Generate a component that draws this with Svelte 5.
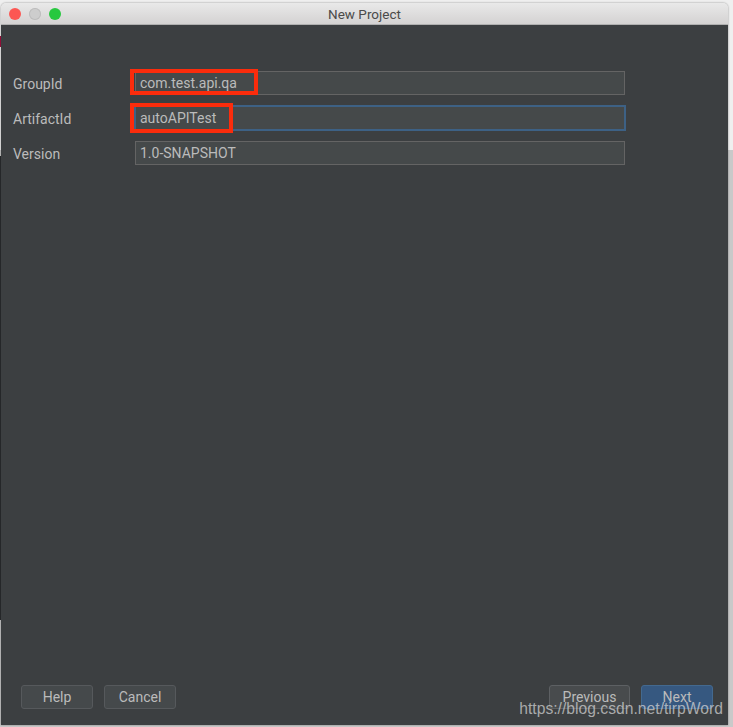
<script>
  const fields = [
    { label: 'GroupId', value: 'com.test.api.qa', mark: 'mark-a' },
    { label: 'ArtifactId', value: 'autoAPITest', mark: 'mark-b', focused: true },
    { label: 'Version', value: '1.0-SNAPSHOT' }
  ];
</script>

<div class="page">
  <div class="window">
    <header class="titlebar">
      <div class="lights">
        <span class="light red"></span>
        <span class="light grey"></span>
        <span class="light green"></span>
      </div>
      <div class="title">New Project</div>
    </header>
    <main class="body">
      <form class="form">
        {#each fields as f}
          <div class="row">
            <label class="label" for={f.label}>{f.label}</label>
            <div class="input" class:focused={f.focused}>
              <span id={f.label} class="value">{f.value}</span>
              {#if f.mark}<span class="mark {f.mark}"></span>{/if}
            </div>
          </div>
        {/each}
      </form>
      <footer class="footer">
        <div class="group">
          <button type="button" class="btn">Help</button>
          <button type="button" class="btn">Cancel</button>
        </div>
        <div class="group right">
          <button type="button" class="btn prev">Previous</button>
          <button type="button" class="btn next">Next</button>
        </div>
      </footer>
      <div class="watermark">https://blog.csdn.net/tirpWord</div>
    </main>
  </div>
</div>

<style>
  :global(body) {
    margin: 0;
    background: #c9c9c9;
  }
  .page {
    width: 733px;
    height: 727px;
    padding: 3px 5px 2px 1px;
    box-sizing: border-box;
    overflow: hidden;
    font-family: Roboto, "Liberation Sans", Arial, sans-serif;
    background:
      linear-gradient(to right, #a3123f 1px, transparent 1px) 0 36px / 100% 11px no-repeat,
      linear-gradient(to right, #2b2d2f 1px, transparent 1px) 0 156px / 100% 464px no-repeat,
      linear-gradient(to bottom, #efefef 0, #efefef 150px, transparent 150px),
      #c9c9c9;
  }
  .window {
    height: 100%;
    display: flex;
    flex-direction: column;
    border-radius: 5px 5px 0 0;
    overflow: hidden;
    box-shadow: 0 0 2px rgba(0, 0, 0, 0.45);
  }
  .titlebar {
    flex: none;
    height: 21px;
    display: flex;
    align-items: center;
    position: relative;
    background: linear-gradient(#e9e9e9, #d4d2d2);
    border-bottom: 1px solid #b0b0b0;
  }
  .lights {
    display: flex;
    gap: 8px;
    padding-left: 8px;
  }
  .light {
    width: 12px;
    height: 12px;
    border-radius: 50%;
  }
  .red { background: #fc5753; }
  .grey { background: #cdcdcd; box-shadow: inset 0 0 0 1px #bdbdbd; }
  .green { background: #27c83f; }
  .title {
    position: absolute;
    left: 0;
    right: 0;
    top: 3px;
    text-align: center;
    font-size: 13.5px;
    line-height: 16px;
    color: #4a4a4a;
  }
  .body {
    flex: 1;
    position: relative;
    display: flex;
    flex-direction: column;
    justify-content: space-between;
    background: #3c3f41;
    padding: 46px 15px 16px 12px;
  }
  .form {
    display: flex;
    flex-direction: column;
    gap: 11px;
  }
  .row {
    display: flex;
    align-items: center;
  }
  .label {
    width: 122px;
    padding-top: 1px;
    font-size: 14px;
    color: #bbbbbb;
  }
  .input {
    position: relative;
    width: 490px;
    height: 24px;
    box-sizing: border-box;
    border: 1px solid #646464;
    background: #45494a;
    color: #bbbbbb;
    font-size: 14px;
    line-height: 23px;
    padding-left: 4px;
  }
  .input.focused {
    border: 2px solid #3d6185;
    width: 492px;
    height: 26px;
    margin: -1px;
    padding-left: 4px;
    line-height: 23px;
  }
  .mark {
    position: absolute;
    border: 4px solid #fb2c0c;
    box-sizing: border-box;
  }
  .mark-a {
    left: -6px;
    top: -3px;
    width: 128px;
    height: 26px;
  }
  .mark-b {
    left: -6px;
    top: -4px;
    width: 103px;
    height: 30px;
  }
  .footer {
    display: flex;
    justify-content: space-between;
    padding-left: 8px;
  }
  .group {
    display: flex;
    gap: 11px;
  }
  .btn {
    width: 72px;
    height: 24px;
    padding: 0;
    font: inherit;
    font-size: 14px;
    color: #bbbbbb;
    background: #45494b;
    border: 1px solid #56595c;
    border-radius: 3px;
  }
  .prev {
    width: 81px;
    background: #484b4d;
    border-color: #5d6063;
  }
  .next {
    background: #365880;
    border-color: #43698f;
  }
  .watermark {
    position: absolute;
    right: 5px;
    bottom: 7px;
    font-family: "Liberation Sans", Arial, sans-serif;
    font-size: 15.7px;
    line-height: 18px;
    color: rgba(214, 214, 214, 0.72);
  }
</style>
